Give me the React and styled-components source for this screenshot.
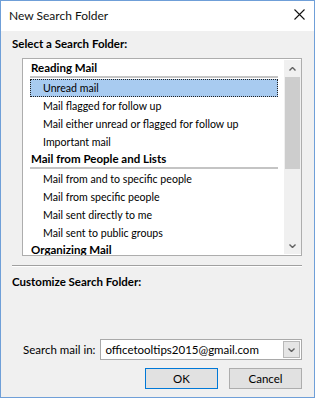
import React from "react";
import styled, { createGlobalStyle } from "styled-components";

const Global = createGlobalStyle`
  html, body { margin: 0; padding: 0; background: #ffffff; }
  * { box-sizing: border-box; }
`;

const FONT = `Lato, "Noto Sans", "Liberation Sans", sans-serif`;

const Window = styled.div`
  width: 315px;
  height: 398px;
  border: 1px solid #6f9fd8;
  display: flex;
  flex-direction: column;
  font-family: ${FONT};
  font-size: 11.5px;
  color: #000;
  overflow: hidden;
`;

const TitleBar = styled.div`
  height: 30px;
  background: #fff;
  display: flex;
  align-items: center;
  justify-content: space-between;
  padding: 0 9px 0 8px;
`;

const Title = styled.div`
  font-size: 12px;
  color: #111;
  line-height: 16px;
`;

const CloseBtn = styled.div`
  width: 12px;
  height: 12px;
  display: flex;
  align-items: center;
  justify-content: center;
  margin-top: -3px;
`;

const Body = styled.div`
  flex: 1;
  background: #f0f0f0;
  padding: 5px 12px 0 11px;
  display: flex;
  flex-direction: column;
`;

const SectionLabel = styled.div`
  font-weight: bold;
  line-height: 16px;
  margin-top: ${(p) => p.$mt || 0}px;
`;

const ListBox = styled.div`
  margin: 6px 0 0 10px;
  height: 198px;
  border: 1px solid #adadad;
  background: #fff;
  display: flex;
`;

const ListContent = styled.div`
  flex: 1;
  padding: 1px 6px 0 7px;
  overflow: hidden;
  font-size: 10.6px;
`;

const GroupHeader = styled.div`
  height: 18px;
  font-weight: bold;
  font-size: 11.5px;
  line-height: 15px;
  padding-left: 1px;
  border-bottom: 2px solid #c4c4c4;
  margin-bottom: 1px;
  white-space: nowrap;
`;

const Item = styled.div`
  height: 18px;
  line-height: 16px;
  padding-left: 12px;
  white-space: nowrap;
  border: 1px ${(p) => (p.$selected ? "dotted #222" : "solid transparent")};
  background: ${(p) => (p.$selected ? "#a8cbf0" : "transparent")};
`;

const Scrollbar = styled.div`
  width: 17px;
  margin: 1px 0;
  background: #f0f0f0;
  display: flex;
  flex-direction: column;
`;

const ScrollArrow = styled.div`
  height: 17px;
  display: flex;
  align-items: center;
  justify-content: center;
`;

const Track = styled.div`
  flex: 1;
  display: flex;
  flex-direction: column;
`;

const Thumb = styled.div`
  height: 92px;
  margin: 0 1px;
  background: #cdcdcd;
`;

const Divider = styled.div`
  margin-top: 9px;
  height: 1px;
  background: #a0a0a0;
  box-shadow: 0 1px 0 #ffffff;
`;

const SearchRow = styled.div`
  margin-top: 49px;
  display: flex;
  align-items: center;
  padding-left: 11px;
`;

const FieldLabel = styled.div`
  line-height: 16px;
  margin-right: 5px;
`;

const Combo = styled.div`
  flex: 1;
  height: 21px;
  border: 1px solid #a9a9a9;
  background: #fff;
  display: flex;
  align-items: center;
  padding: 0 1px 0 4px;
`;

const ComboText = styled.div`
  flex: 1;
  line-height: 16px;
`;

const ComboButton = styled.div`
  width: 17px;
  height: 17px;
  background: #e5e5e5;
  border: 1px solid #b8b8b8;
  display: flex;
  align-items: center;
  justify-content: center;
`;

const ButtonRow = styled.div`
  margin-top: 8px;
  display: flex;
  justify-content: flex-end;
  gap: 11px;
`;

const Button = styled.div`
  width: 73px;
  height: 21px;
  background: #e1e1e1;
  border: 1px solid ${(p) => (p.$default ? "#0078d7" : "#adadad")};
  display: flex;
  align-items: center;
  justify-content: center;
  line-height: 16px;
`;

const Chevron = ({ up }) => (
  <svg width="7" height="4" viewBox="0 0 7 4">
    <polyline
      points={up ? "0.5,3.5 3.5,0.5 6.5,3.5" : "0.5,0.5 3.5,3.5 6.5,0.5"}
      fill="none"
      stroke="#606060"
      strokeWidth="1.4"
    />
  </svg>
);

const groups = [
  {
    name: "Reading Mail",
    items: [
      "Unread mail",
      "Mail flagged for follow up",
      "Mail either unread or flagged for follow up",
      "Important mail",
    ],
  },
  {
    name: "Mail from People and Lists",
    items: [
      "Mail from and to specific people",
      "Mail from specific people",
      "Mail sent directly to me",
      "Mail sent to public groups",
    ],
  },
  { name: "Organizing Mail", items: [] },
];

export default function App() {
  return (
    <>
      <Global />
      <Window>
        <TitleBar>
          <Title>New Search Folder</Title>
          <CloseBtn>
            <svg width="11" height="11" viewBox="0 0 11 11">
              <path d="M0.5 0.5 L10.5 10.5 M10.5 0.5 L0.5 10.5" stroke="#111" strokeWidth="1.1" />
            </svg>
          </CloseBtn>
        </TitleBar>
        <Body>
          <SectionLabel>Select a Search Folder:</SectionLabel>
          <ListBox>
            <ListContent>
              {groups.map((g) => (
                <React.Fragment key={g.name}>
                  <GroupHeader>{g.name}</GroupHeader>
                  {g.items.map((it) => (
                    <Item key={it} $selected={it === "Unread mail"}>
                      {it}
                    </Item>
                  ))}
                </React.Fragment>
              ))}
            </ListContent>
            <Scrollbar>
              <ScrollArrow>
                <Chevron up />
              </ScrollArrow>
              <Track>
                <Thumb />
              </Track>
              <ScrollArrow>
                <Chevron />
              </ScrollArrow>
            </Scrollbar>
          </ListBox>
          <Divider />
          <SectionLabel $mt={8}>Customize Search Folder:</SectionLabel>
          <SearchRow>
            <FieldLabel>Search mail in:</FieldLabel>
            <Combo>
              <ComboText>officetooltips2015@gmail.com</ComboText>
              <ComboButton>
                <Chevron />
              </ComboButton>
            </Combo>
          </SearchRow>
          <ButtonRow>
            <Button $default>OK</Button>
            <Button>Cancel</Button>
          </ButtonRow>
        </Body>
      </Window>
    </>
  );
}
